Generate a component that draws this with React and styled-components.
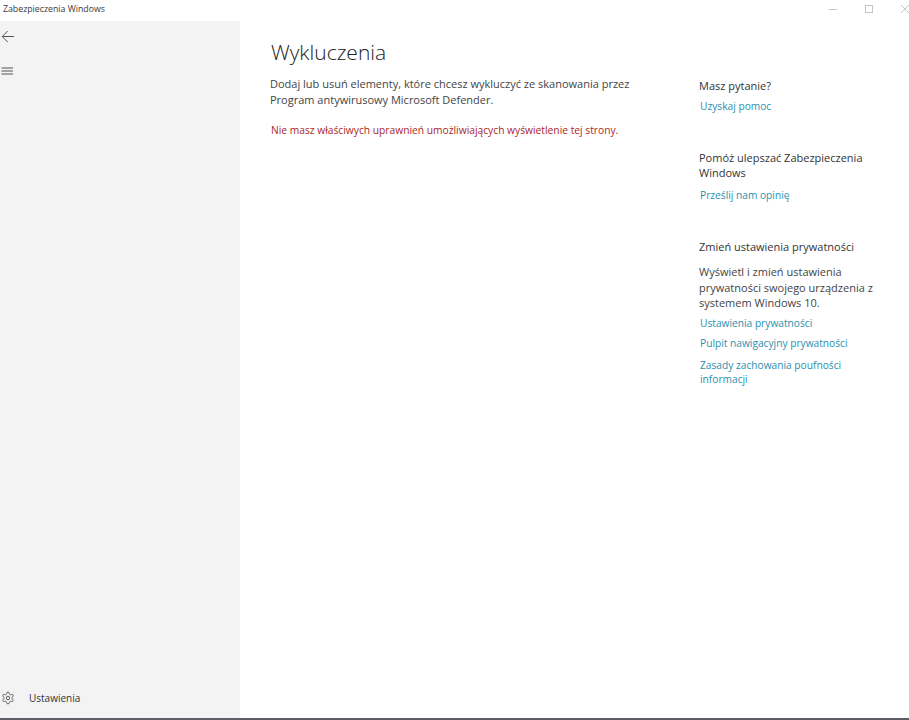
import React from "react";
import styled, { createGlobalStyle } from "styled-components";

const Global = createGlobalStyle`
  html, body { margin: 0; padding: 0; background: #fff; }
  body { font-family: "Open Sans", "Noto Sans", "Liberation Sans", sans-serif; }
`;

const Window = styled.div`
  width: 909px;
  height: 720px;
  display: flex;
  flex-direction: column;
  background: #fff;
  overflow: hidden;
  border-bottom: 2px solid #5d5d66;
  box-sizing: border-box;
`;

const TitleBar = styled.header`
  height: 21px;
  flex: none;
  display: flex;
  align-items: center;
  justify-content: space-between;
  padding: 0 0 4px 3px;
  box-sizing: border-box;
`;

const AppTitle = styled.span`
  font-size: 8.75px;
  color: #3a3a3a;
`;

const WindowControls = styled.div`
  display: flex;
  align-items: center;
  gap: 26px;
  margin-right: -1px;
`;

const ControlIcon = styled.svg`
  width: 10px;
  height: 10px;
  display: block;
  fill: none;
  stroke: #c4c4c4;
  stroke-width: 1;
`;

const Body = styled.div`
  flex: 1;
  display: flex;
  min-height: 0;
`;

const Sidebar = styled.nav`
  width: 240px;
  flex: none;
  background: #f3f3f3;
  display: flex;
  flex-direction: column;
  justify-content: space-between;
  padding: 9px 0 13px 1px;
  box-sizing: border-box;
`;

const SideTop = styled.div`
  display: flex;
  flex-direction: column;
  gap: 20px;
`;

const NavIcon = styled.svg`
  width: 14px;
  height: 14px;
  display: block;
  fill: none;
  stroke: #555;
  stroke-width: ${(p) => p.$stroke || 1};
`;

const SettingsRow = styled.div`
  display: flex;
  align-items: center;
  gap: 14px;
  font-size: 10px;
  color: #333;
`;

const Main = styled.main`
  flex: 1;
  display: flex;
  justify-content: space-between;
  min-width: 0;
`;

const Content = styled.section`
  width: 362px;
  margin-left: 30px;
  padding-top: 17px;
`;

const Heading = styled.h1`
  margin: 0 0 10px 1px;
  font-weight: 300;
  font-size: 21px;
  line-height: 28px;
  color: #222;
`;

const Description = styled.p`
  margin: 0 0 16px;
  font-size: 11px;
  line-height: 15.5px;
  color: #444;
`;

const ErrorText = styled.p`
  margin: 0;
  padding-left: 1px;
  font-size: 10.25px;
  line-height: 15px;
  color: #aa1f28;
  white-space: nowrap;
`;

const Aside = styled.aside`
  width: 210px;
  box-sizing: border-box;
  padding: 57px 30px 0 0;
`;

const HelpBlock = styled.div`
  margin-bottom: ${(p) => p.$gap}px;
`;

const HelpTitle = styled.h2`
  margin: 0 0 ${(p) => p.$after}px;
  font-weight: 400;
  font-size: 11px;
  line-height: 15.5px;
  color: #333;
`;

const HelpText = styled.p`
  margin: 0 0 5.5px;
  font-size: 11px;
  line-height: 15.5px;
  color: #444;
`;

const HelpLink = styled.a`
  display: block;
  margin: ${(p) => (p.$spaced ? 8 : 0)}px 0 6px 1px;
  font-size: 10.2px;
  line-height: 14px;
  color: #2a8fb0;
`;

export default function App() {
  return (
    <>
      <Global />
      <Window>
        <TitleBar>
          <AppTitle>Zabezpieczenia Windows</AppTitle>
          <WindowControls>
            <ControlIcon viewBox="0 0 10 10"><path d="M1 5.5h8" /></ControlIcon>
            <ControlIcon viewBox="0 0 10 10"><rect x="1.5" y="1.5" width="7" height="7" /></ControlIcon>
            <ControlIcon viewBox="0 0 10 10"><path d="M1 1l8 8M9 1l-8 8" /></ControlIcon>
          </WindowControls>
        </TitleBar>
        <Body>
          <Sidebar>
            <SideTop>
              <NavIcon viewBox="0 0 14 14"><path d="M13 6.5H1.5M6.7 1L1.2 6.5 6.7 12" /></NavIcon>
              <NavIcon viewBox="0 0 14 14" $stroke={1.1}><path d="M.5 4h11.5M.5 7h11.5M.5 10h11.5" /></NavIcon>
            </SideTop>
            <SettingsRow>
              <NavIcon viewBox="0 0 24 24" $stroke={1.6}>
                <path d="M12.2 2h-.4a2 2 0 0 0-2 2v.2a2 2 0 0 1-1 1.7l-.4.3a2 2 0 0 1-2 0l-.2-.1a2 2 0 0 0-2.7.7l-.2.4a2 2 0 0 0 .7 2.7l.2.1a2 2 0 0 1 1 1.7v.5a2 2 0 0 1-1 1.8l-.2.1a2 2 0 0 0-.7 2.7l.2.4a2 2 0 0 0 2.7.7l.2-.1a2 2 0 0 1 2 0l.4.3a2 2 0 0 1 1 1.7v.2a2 2 0 0 0 2 2h.4a2 2 0 0 0 2-2v-.2a2 2 0 0 1 1-1.7l.4-.3a2 2 0 0 1 2 0l.2.1a2 2 0 0 0 2.7-.7l.2-.4a2 2 0 0 0-.7-2.7l-.2-.1a2 2 0 0 1-1-1.8v-.5a2 2 0 0 1 1-1.7l.2-.1a2 2 0 0 0 .7-2.7l-.2-.4a2 2 0 0 0-2.7-.7l-.2.1a2 2 0 0 1-2 0l-.4-.3a2 2 0 0 1-1-1.7V4a2 2 0 0 0-2-2z" />
                <circle cx="12" cy="12" r="3" />
              </NavIcon>
              <span>Ustawienia</span>
            </SettingsRow>
          </Sidebar>
          <Main>
            <Content>
              <Heading>Wykluczenia</Heading>
              <Description>Dodaj lub usuń elementy, które chcesz wykluczyć ze skanowania przez Program antywirusowy Microsoft Defender.</Description>
              <ErrorText>Nie masz właściwych uprawnień umożliwiających wyświetlenie tej strony.</ErrorText>
            </Content>
            <Aside>
              <HelpBlock $gap={37}>
                <HelpTitle $after={5}>Masz pytanie?</HelpTitle>
                <HelpLink>Uzyskaj pomoc</HelpLink>
              </HelpBlock>
              <HelpBlock $gap={37}>
                <HelpTitle $after={7}>Pomóż ulepszać Zabezpieczenia Windows</HelpTitle>
                <HelpLink>Prześlij nam opinię</HelpLink>
              </HelpBlock>
              <HelpBlock $gap={0}>
                <HelpTitle $after={10}>Zmień ustawienia prywatności</HelpTitle>
                <HelpText>Wyświetl i zmień ustawienia prywatności swojego urządzenia z systemem Windows 10.</HelpText>
                <HelpLink>Ustawienia prywatności</HelpLink>
                <HelpLink>Pulpit nawigacyjny prywatności</HelpLink>
                <HelpLink $spaced>Zasady zachowania poufności informacji</HelpLink>
              </HelpBlock>
            </Aside>
          </Main>
        </Body>
      </Window>
    </>
  );
}
